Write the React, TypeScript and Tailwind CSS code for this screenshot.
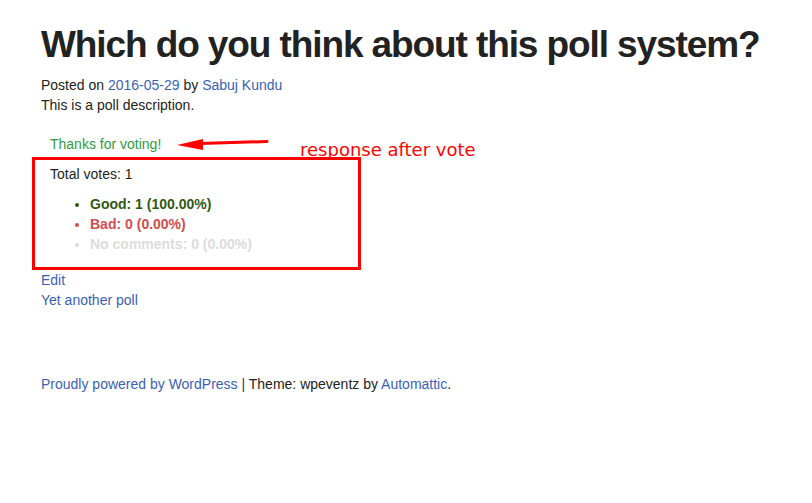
import React from 'react';

const results = [
  { label: 'Good', votes: 1, pct: '100.00%', color: 'text-[#2f5a14]', dot: 'marker:text-[#2f5a14]' },
  { label: 'Bad', votes: 0, pct: '0.00%', color: 'text-[#d24d4d]', dot: 'marker:text-[#d24d4d]' },
  { label: 'No comments', votes: 0, pct: '0.00%', color: 'text-[#dcdcdc]', dot: 'marker:text-[#dcdcdc]' },
];

export default function App() {
  return (
    <div className="relative min-h-[503px] bg-white font-['Liberation_Sans',Arial,sans-serif] text-[14px] leading-[20px] text-[#222]">
      <div className="pl-[41px] pt-[23px]">
        <h1 className="whitespace-nowrap text-[37px] font-bold leading-[44px] tracking-[-1.1px] text-[#222]">
          Which do you think about this poll system?
        </h1>
        <div className="mt-[8px]">
          Posted on <a className="text-[#3a5fb4]">2016-05-29</a> by{' '}
          <a className="text-[#3a5fb4]">Sabuj Kundu</a>
        </div>
        <p>This is a poll description.</p>

        {/* poll result */}
        <div className="mt-[19px] pl-[9px]">
          <p className="text-[#2f9a3f]">Thanks for voting!</p>
          <p className="mt-[10px]">Total votes: 1</p>
          <ul className="mt-[10px] list-disc pl-[40px] font-bold">
            {results.map((r) => (
              <li key={r.label} className={`${r.color} ${r.dot}`}>
                {r.label}: {r.votes} ({r.pct})
              </li>
            ))}
          </ul>
        </div>

        <div className="mt-[17px] flex flex-col leading-[19.5px]">
          <a className="text-[#3a5fb4]">Edit</a>
          <a className="text-[#3a5fb4]">Yet another poll</a>
        </div>

        <footer className="mt-[64px]">
          <a className="text-[#3a5fb4]">Proudly powered by WordPress</a>
          <span className="text-[#2b3a6b]"> | </span>
          Theme: wpeventz by <a className="text-[#3a5fb4]">Automattic</a>.
        </footer>
      </div>

      {/* screenshot annotations */}
      <div className="pointer-events-none absolute left-[32px] top-[157px] h-[113px] w-[329px] border-[3px] border-[#ff0000]" />
      <svg className="pointer-events-none absolute left-[170px] top-[130px]" width="110" height="30" viewBox="0 0 110 30">
        <line x1="30" y1="13.5" x2="97" y2="11.5" stroke="#ff0000" strokeWidth="3" strokeLinecap="round" />
        <polygon points="7,15 33,9 33,20" fill="#ff0000" />
      </svg>
      <span className="absolute left-[300px] top-[139px] font-['DejaVu_Sans',Verdana,sans-serif] text-[18px] leading-[22px] text-[#ff0000]">
        response after vote
      </span>
    </div>
  );
}
